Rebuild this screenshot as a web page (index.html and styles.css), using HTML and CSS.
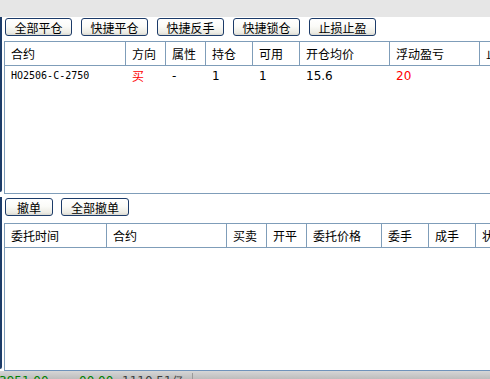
FILE: index.html
```html
<!DOCTYPE html>
<html>
<head>
<meta charset="utf-8">
<link rel="stylesheet" href="styles.css">
</head>
<body>
<div class="topbar"></div>

<div class="panel p1">
  <div class="edge"></div>
  <div class="content">
    <div class="btnrow">
      <button class="btn">全部平仓</button>
      <button class="btn">快捷平仓</button>
      <button class="btn">快捷反手</button>
      <button class="btn">快捷锁仓</button>
      <button class="btn">止损止盈</button>
    </div>
    <div class="grid g1">
      <div class="hdr">
        <div class="c c1">合约</div>
        <div class="c c2">方向</div>
        <div class="c c3">属性</div>
        <div class="c c4">持仓</div>
        <div class="c c5">可用</div>
        <div class="c c6">开仓均价</div>
        <div class="c c7">浮动盈亏</div>
        <div class="c c8">止损</div>
      </div>
      <div class="row">
        <div class="c c1 mono">HO2506-C-2750</div>
        <div class="c c2 red">买</div>
        <div class="c c3 num">-</div>
        <div class="c c4 num">1</div>
        <div class="c c5 num">1</div>
        <div class="c c6 num">15.6</div>
        <div class="c c7 num red">20</div>
        <div class="c c8"></div>
      </div>
    </div>
  </div>
</div>

<div class="panel p2">
  <div class="edge"></div>
  <div class="content">
    <div class="btnrow">
      <button class="btn small">撤单</button>
      <button class="btn wide">全部撤单</button>
    </div>
    <div class="grid g2">
      <div class="hdr">
        <div class="c d1">委托时间</div>
        <div class="c d2">合约</div>
        <div class="c d3">买卖</div>
        <div class="c d4">开平</div>
        <div class="c d5">委托价格</div>
        <div class="c d6">委手</div>
        <div class="c d7">成手</div>
        <div class="c d8">状态</div>
      </div>
    </div>
  </div>
</div>

<div class="status">
  <span class="st green s1">3951.00</span>
  <span class="st green s2">00.00</span>
  <span class="st gray s3">1110.51亿</span>
  <span class="sep"></span>
</div>
</body>
</html>
```
FILE: styles.css
```css
* { box-sizing: border-box; }
html, body { margin: 0; padding: 0; }
body {
  width: 490px;
  height: 379px;
  overflow: hidden;
  background: #fff;
  font-family: "Noto Sans CJK SC", "DejaVu Sans", sans-serif;
  font-size: 12px;
  color: #000;
  display: flex;
  flex-direction: column;
}
.topbar {
  height: 17px;
  flex: none;
  background: #e6e6e6;
}
.panel {
  display: flex;
  flex: none;
}
.p1 { height: 177px; }
.p2 { height: 174px; margin-top: 3px; }
.edge {
  width: 2px;
  flex: none;
  background: #1d3c68;
  border-radius: 0 0 2px 0;
  margin-right: 2px;
}
.p1 .edge { margin-bottom: 2px; }
.p2 .edge { margin-bottom: 2px; }
.content {
  flex: 1;
  display: flex;
  flex-direction: column;
  min-width: 0;
  padding-top: 1px;
}
.btnrow {
  display: flex;
  gap: 9px;
  padding-left: 1px;
  height: 18px;
  flex: none;
}
.p2 .btnrow { gap: 8px; }
.btn {
  width: 67px;
  height: 18px;
  margin: 0;
  padding: 0;
  border: 1px solid #1c3b69;
  border-radius: 3px;
  background: linear-gradient(#ffffff 0%, #fbfbf8 45%, #ecebe4 85%, #dad9d0 100%);
  font-family: "Noto Sans CJK SC", sans-serif;
  font-size: 12px;
  line-height: 15px;
  color: #000;
}
.btn.small { width: 48px; }
.btn.wide { width: 68px; }
.grid {
  flex: 1;
  border-left: 1px solid #7f9db9;
  border-bottom: 1px solid #7f9db9;
  width: 600px;
}
.g1 { margin-top: 5px; }
.g2 { margin-top: 7px; border-bottom-color: #6f93bb; }
.hdr {
  display: flex;
  height: 25px;
  border-top: 1px solid #7f9db9;
  border-bottom: 1px solid #7f9db9;
}
.hdr .c {
  border-right: 1px solid #7f9db9;
  line-height: 23px;
}
.row {
  display: flex;
  height: 20px;
}
.row .c { line-height: 20px; }
.c {
  flex: none;
  padding-left: 6px;
  white-space: nowrap;
  overflow: hidden;
}
.c1 { width: 121px; }
.c2 { width: 40px; }
.c3 { width: 40px; }
.c4 { width: 47px; }
.c5 { width: 47px; }
.c6 { width: 90px; }
.c7 { width: 90px; }
.c8 { width: 60px; }
.d1 { width: 102px; }
.d2 { width: 120px; }
.d3 { width: 40px; }
.d4 { width: 40px; }
.d5 { width: 75px; }
.d6 { width: 47px; }
.d7 { width: 47px; }
.d8 { width: 60px; }
.mono {
  font-family: "DejaVu Sans Mono", monospace;
  font-size: 10px;
}
.num {
  font-family: "DejaVu Sans", sans-serif;
  font-size: 12px;
}
.red { color: #ff0000; }
.status {
  flex: 1;
  position: relative;
  background: linear-gradient(#d6d6d6, #bdbdbd);
  overflow: hidden;
}
.st {
  position: absolute;
  top: 3px;
  font-family: "DejaVu Sans", sans-serif;
  font-size: 12px;
  line-height: 14px;
}
.green { color: #008000; }
.gray { color: #3c3c3c; }
.s1 { left: -1px; }
.s2 { left: 79px; }
.s3 { left: 122px; }
.sep {
  position: absolute;
  left: 192px;
  top: 2px;
  width: 1px;
  height: 10px;
  background: #9a9a9a;
}
```
